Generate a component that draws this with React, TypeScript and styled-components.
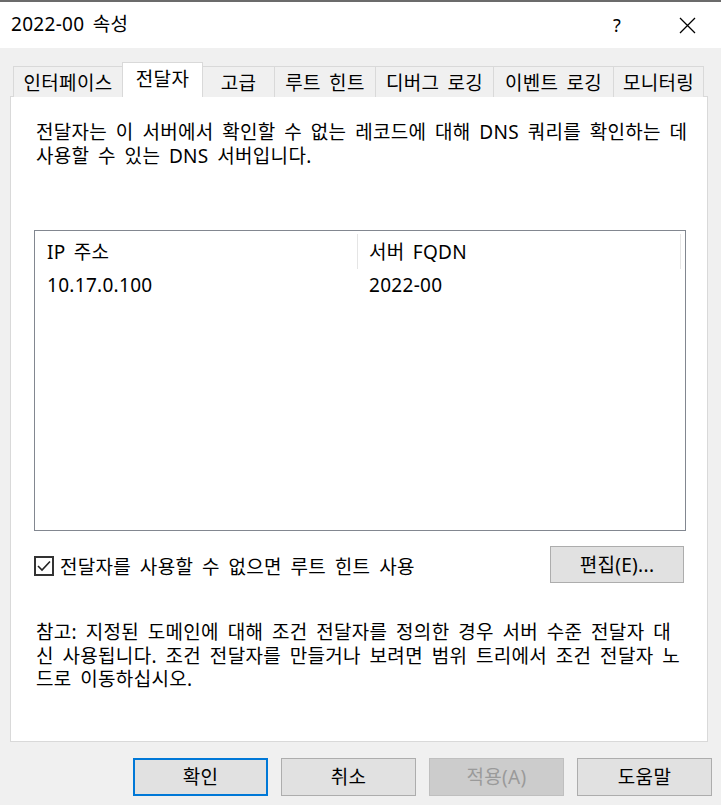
import React from "react";
import styled, { createGlobalStyle } from "styled-components";

const GlobalStyle = createGlobalStyle`
  html, body {
    margin: 0;
    padding: 0;
    background: #f0f0f0;
  }
  body {
    font-family: "Noto Sans", "Noto Sans CJK KR", sans-serif;
    font-size: 19px;
    letter-spacing: 0.3px;
    color: #000;
  }
  * { box-sizing: border-box; }
`;

const Window = styled.div`
  width: 721px;
  height: 805px;
  display: flex;
  flex-direction: column;
  background: #f0f0f0;
  border-top: 2px solid #6b6b6b;
  overflow: hidden;
`;

const TitleBar = styled.div`
  height: 46px;
  flex: none;
  display: flex;
  align-items: center;
  background: #fff;
  padding-left: 11px;
`;

const TitleText = styled.div`
  flex: 1;
  font-size: 19px;
  word-spacing: 3px;
  line-height: 1;
  padding-bottom: 2px;
`;

const CaptionButton = styled.div<{ $w: number }>`
  width: ${(p) => p.$w}px;
  height: 100%;
  display: flex;
  align-items: center;
  justify-content: center;
  font-size: 18px;
`;

const Body = styled.div`
  flex: 1;
  display: flex;
  flex-direction: column;
  padding: 14px 13px 0 10px;
`;

const TabStrip = styled.div`
  height: 35px;
  display: flex;
  align-items: flex-end;
  padding-left: 3px;
  margin-bottom: -1px;
  position: relative;
  z-index: 1;
`;

const Tab = styled.div<{ $w: number; $active?: boolean }>`
  width: ${(p) => p.$w}px;
  height: ${(p) => (p.$active ? 35 : 31)}px;
  margin-left: -1px;
  display: flex;
  align-items: center;
  justify-content: center;
  background: ${(p) => (p.$active ? "#fff" : "#f0f0f0")};
  border: 1px solid #d9d9d9;
  border-bottom: none;
  word-spacing: 3px;
  white-space: nowrap;
  padding-bottom: ${(p) => (p.$active ? 4 : 1)}px;
  position: relative;
  z-index: ${(p) => (p.$active ? 2 : 1)};
  &:first-child {
    margin-left: 0;
  }
`;

const Panel = styled.div`
  height: 646px;
  background: #fff;
  border: 1px solid #d9d9d9;
  padding: 23px 21px 0 23px;
  display: flex;
  flex-direction: column;
`;

const Paragraph = styled.p<{ $lh: number }>`
  margin: 0;
  padding-left: 2px;
  line-height: ${(p) => p.$lh}px;
  word-spacing: 3.5px;
  white-space: nowrap;
`;

const ListBox = styled.div`
  margin-top: 62px;
  height: 301px;
  border: 1px solid #828790;
  display: flex;
  flex-direction: column;
`;

const HeaderRow = styled.div`
  height: 42px;
  display: grid;
  grid-template-columns: 323px 323px 1fr;
  align-items: stretch;
`;

const HeaderCell = styled.div<{ $pad: number; $sep?: boolean }>`
  display: flex;
  align-items: center;
  padding-left: ${(p) => p.$pad}px;
  padding-bottom: 2px;
  word-spacing: 3px;
  position: relative;
  &::after {
    content: "";
    position: absolute;
    right: 0;
    top: 3px;
    bottom: 4px;
    width: 1px;
    background: ${(p) => (p.$sep ? "#e5e5e5" : "transparent")};
  }
`;

const DataRow = styled.div`
  height: 24px;
  display: grid;
  grid-template-columns: 323px 323px 1fr;
  align-items: center;
`;

const DataCell = styled.div<{ $pad: number }>`
  padding-left: ${(p) => p.$pad}px;
  line-height: 24px;
`;

const OptionRow = styled.div`
  margin-top: 15px;
  padding-right: 2px;
  display: flex;
  align-items: center;
  justify-content: space-between;
`;

const CheckLabel = styled.label`
  display: flex;
  align-items: center;
  gap: 6px;
  word-spacing: 3.5px;
  white-space: nowrap;
  padding-top: 2px;
`;

const CheckBox = styled.span`
  width: 20px;
  height: 20px;
  border: 2px solid #333;
  background: #fff;
  display: flex;
  align-items: center;
  justify-content: center;
`;

const Button = styled.button<{ $w: number; $h: number; $default?: boolean }>`
  width: ${(p) => p.$w}px;
  height: ${(p) => p.$h}px;
  font: inherit;
  font-size: 19px;
  letter-spacing: 0.3px;
  color: #000;
  background: #e1e1e1;
  border: ${(p) => (p.$default ? "2px solid #0078d7" : "1px solid #adadad")};
  padding: 0 0 2px;
  margin: 0;
  display: flex;
  align-items: center;
  justify-content: center;
  &:disabled {
    background: #cccccc;
    border-color: #bfbfbf;
    color: #9a9a9a;
  }
`;

const Note = styled(Paragraph)`
  margin-top: 38px;
`;

const ButtonRow = styled.div`
  display: flex;
  justify-content: flex-end;
  gap: 13px;
  padding: 16px 9px 0 0;
  margin-right: -13px;
`;

const tabs: { label: string; w: number; active?: boolean }[] = [
  { label: "인터페이스", w: 110 },
  { label: "전달자", w: 81, active: true },
  { label: "고급", w: 73 },
  { label: "루트 힌트", w: 102 },
  { label: "디버그 로깅", w: 119 },
  { label: "이벤트 로깅", w: 121 },
  { label: "모니터링", w: 91 },
];

export default function App() {
  return (
    <>
      <GlobalStyle />
      <Window>
        <TitleBar>
          <TitleText>2022-00 속성</TitleText>
          <CaptionButton $w={72}>?</CaptionButton>
          <CaptionButton $w={68}>
            <svg width="17" height="17" viewBox="0 0 17 17">
              <path d="M1 1 L16 16 M16 1 L1 16" stroke="#000" strokeWidth="1.3" fill="none" />
            </svg>
          </CaptionButton>
        </TitleBar>
        <Body>
          <TabStrip>
            {tabs.map((t) => (
              <Tab key={t.label} $w={t.w} $active={t.active}>
                {t.label}
              </Tab>
            ))}
          </TabStrip>
          <Panel>
            <Paragraph $lh={24}>
              전달자는 이 서버에서 확인할 수 없는 레코드에 대해 DNS 쿼리를 확인하는 데
              <br />
              사용할 수 있는 DNS 서버입니다.
            </Paragraph>
            <ListBox>
              <HeaderRow>
                <HeaderCell $pad={12} $sep>IP 주소</HeaderCell>
                <HeaderCell $pad={11} $sep>서버 FQDN</HeaderCell>
                <HeaderCell $pad={0} />
              </HeaderRow>
              <DataRow>
                <DataCell $pad={12}>10.17.0.100</DataCell>
                <DataCell $pad={11}>2022-00</DataCell>
              </DataRow>
            </ListBox>
            <OptionRow>
              <CheckLabel>
                <CheckBox>
                  <svg width="14" height="12" viewBox="0 0 14 12">
                    <path d="M1 6 L5 10 L13 1.5" stroke="#222" strokeWidth="1.6" fill="none" />
                  </svg>
                </CheckBox>
                전달자를 사용할 수 없으면 루트 힌트 사용
              </CheckLabel>
              <Button $w={134} $h={37}>편집(E)...</Button>
            </OptionRow>
            <Note $lh={23.5}>
              참고: 지정된 도메인에 대해 조건 전달자를 정의한 경우 서버 수준 전달자 대
              <br />
              신 사용됩니다. 조건 전달자를 만들거나 보려면 범위 트리에서 조건 전달자 노
              <br />
              드로 이동하십시오.
            </Note>
          </Panel>
          <ButtonRow>
            <Button $w={135} $h={38} $default>확인</Button>
            <Button $w={135} $h={38}>취소</Button>
            <Button $w={135} $h={38} disabled>적용(A)</Button>
            <Button $w={135} $h={38}>도움말</Button>
          </ButtonRow>
        </Body>
      </Window>
    </>
  );
}
